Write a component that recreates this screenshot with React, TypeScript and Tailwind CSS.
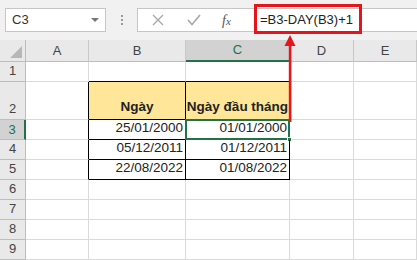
import React from 'react'

const cols = ['A', 'B', 'C', 'D', 'E']

const rows: { n: number; h: string; b?: string; c?: string; head?: boolean }[] = [
  { n: 1, h: 'h-[20px]' },
  { n: 2, h: 'h-[38px]', b: 'Ngày', c: 'Ngày đầu tháng', head: true },
  { n: 3, h: 'h-[20px]', b: '25/01/2000', c: '01/01/2000' },
  { n: 4, h: 'h-[20px]', b: '05/12/2011', c: '01/12/2011' },
  { n: 5, h: 'h-[20px]', b: '22/08/2022', c: '01/08/2022' },
  { n: 6, h: 'h-[20px]' },
  { n: 7, h: 'h-[20px]' },
  { n: 8, h: 'h-[20px]' },
  { n: 9, h: 'h-[20px]' },
]

const App = () => {
  return (
    <div className="relative w-[417px] h-[260px] overflow-hidden bg-white font-['Liberation_Sans',sans-serif] text-[#222]">
      {/* toolbar */}
      <div className="h-[40px] bg-[#f1f1f1] flex items-start pt-[8px]">
        <div className="ml-[5px] w-[101px] h-[24px] bg-white border border-[#c6c6c6] flex items-center justify-between pl-[6px] pr-[6px]">
          <span className="text-[13px] text-[#333]">C3</span>
          <span className="w-0 h-0 border-l-[4px] border-r-[4px] border-t-[4px] border-l-transparent border-r-transparent border-t-[#777]"></span>
        </div>
        <div className="w-[31px] h-[24px] flex flex-col items-center justify-center gap-[2px]">
          <span className="w-[2px] h-[2px] bg-[#9a9a9a]"></span>
          <span className="w-[2px] h-[2px] bg-[#9a9a9a]"></span>
          <span className="w-[2px] h-[2px] bg-[#9a9a9a]"></span>
        </div>
        <div className="flex-1 h-[24px] bg-white border border-r-0 border-[#c6c6c6] flex items-center">
          <div className="w-[110px] flex items-center">
            <svg width="36" height="22" viewBox="0 0 36 22" className="ml-[2px]">
              <path d="M13 6 L23 16 M23 6 L13 16" stroke="#a8a8a8" strokeWidth="1.4" fill="none" />
            </svg>
            <svg width="36" height="22" viewBox="0 0 36 22">
              <path d="M12 11 L16 15.5 L24 6" stroke="#a8a8a8" strokeWidth="1.6" fill="none" />
            </svg>
            <span className="ml-[10px] text-[14px] italic text-[#555] font-['Liberation_Serif',serif]">
              f<span className="text-[11px]">x</span>
            </span>
          </div>
          <div className="flex-1 pl-[12px] text-[13px] text-[#222]">=B3-DAY(B3)+1</div>
        </div>
      </div>

      {/* sheet */}
      <div className="grid grid-cols-[26px_63px_97px_104px_64px_1fr] text-[13.5px]">
        {/* header row */}
        <div className="h-[22px] bg-[#e9e9e9] border-r border-b border-[#bdbdbd] flex items-end justify-end p-[3px]">
          <svg width="12" height="12" viewBox="0 0 12 12">
            <path d="M12 0 L12 12 L0 12 Z" fill="#b7b7b7" />
          </svg>
        </div>
        {cols.map((c) =>
          c === 'C' ? (
            <div key={c} className="h-[22px] bg-[#d2d2d2] border-r border-r-[#bdbdbd] border-b-[2px] border-b-[#217346] flex items-center justify-center text-[13px] text-[#217346]">
              {c}
            </div>
          ) : (
            <div key={c} className="h-[22px] bg-[#e9e9e9] border-r border-b border-r-[#c8c8c8] border-b-[#bdbdbd] flex items-center justify-center text-[13px] text-[#444]">
              {c}
            </div>
          )
        )}

        {rows.map((r) => (
          <React.Fragment key={r.n}>
            <div
              className={
                r.n === 3
                  ? `${r.h} bg-[#d2d2d2] border-r-[2px] border-r-[#217346] border-b border-b-[#bdbdbd] flex items-center justify-center text-[13px] text-[#217346]`
                  : `${r.h} bg-[#e9e9e9] border-r border-b border-[#bdbdbd] flex items-end justify-center pb-[1px] text-[13px] text-[#444]`
              }
            >
              {r.n}
            </div>
            {/* A */}
            <div
              className={
                r.n >= 2 && r.n <= 5
                  ? `${r.h} border-b border-b-[#dadada] border-r border-r-black`
                  : `${r.h} border-b border-r border-[#dadada]`
              }
            ></div>
            {/* B */}
            {r.n === 1 ? (
              <div className={`${r.h} border-r border-r-[#dadada] border-b border-b-black`}></div>
            ) : r.head ? (
              <div className={`${r.h} bg-[#ffe699] border-r border-b border-black flex items-end justify-center pb-[2px] font-bold`}>
                {r.b}
              </div>
            ) : r.b ? (
              <div className={`${r.h} border-r border-b border-black flex items-end justify-end pr-[2px] pb-[1px]`}>
                {r.b}
              </div>
            ) : (
              <div className={`${r.h} border-b border-r border-[#dadada]`}></div>
            )}
            {/* C */}
            {r.n === 1 ? (
              <div className={`${r.h} border-r border-r-[#dadada] border-b border-b-black`}></div>
            ) : r.head ? (
              <div className={`${r.h} bg-[#ffe699] border-r border-b border-black flex items-end justify-center pb-[2px] font-bold whitespace-nowrap`}>
                {r.c}
              </div>
            ) : r.c ? (
              <div className={`relative ${r.h} border-r border-b border-black flex items-end justify-end pr-[2px] pb-[1px]`}>
                {r.c}
                {r.n === 3 && (
                  <>
                    <div className="absolute -left-[1px] -top-[1px] -right-[1px] -bottom-[1px] border-2 border-[#217346]"></div>
                    <div className="absolute -right-[3px] -bottom-[3px] w-[5px] h-[5px] bg-[#217346] border border-white"></div>
                  </>
                )}
              </div>
            ) : (
              <div className={`${r.h} border-b border-r border-[#dadada]`}></div>
            )}
            {/* D */}
            <div className={`${r.h} border-b border-r border-[#dadada]`}></div>
            {/* E */}
            <div className={`${r.h} border-b border-r border-[#dadada]`}></div>
          </React.Fragment>
        ))}
      </div>

      {/* annotation: red box + arrow */}
      <div className="absolute left-[254px] top-[4px] w-[108px] h-[30px] border-[3px] border-[#e8141b]"></div>
      <svg className="absolute left-[283px] top-[34px]" width="14" height="88" viewBox="0 0 14 88">
        <path d="M7 1 L12.5 12 L1.5 12 Z" fill="#e8141b" />
        <rect x="5.8" y="11" width="2.6" height="77" fill="#e8141b" />
      </svg>
    </div>
  )
}

export default App
